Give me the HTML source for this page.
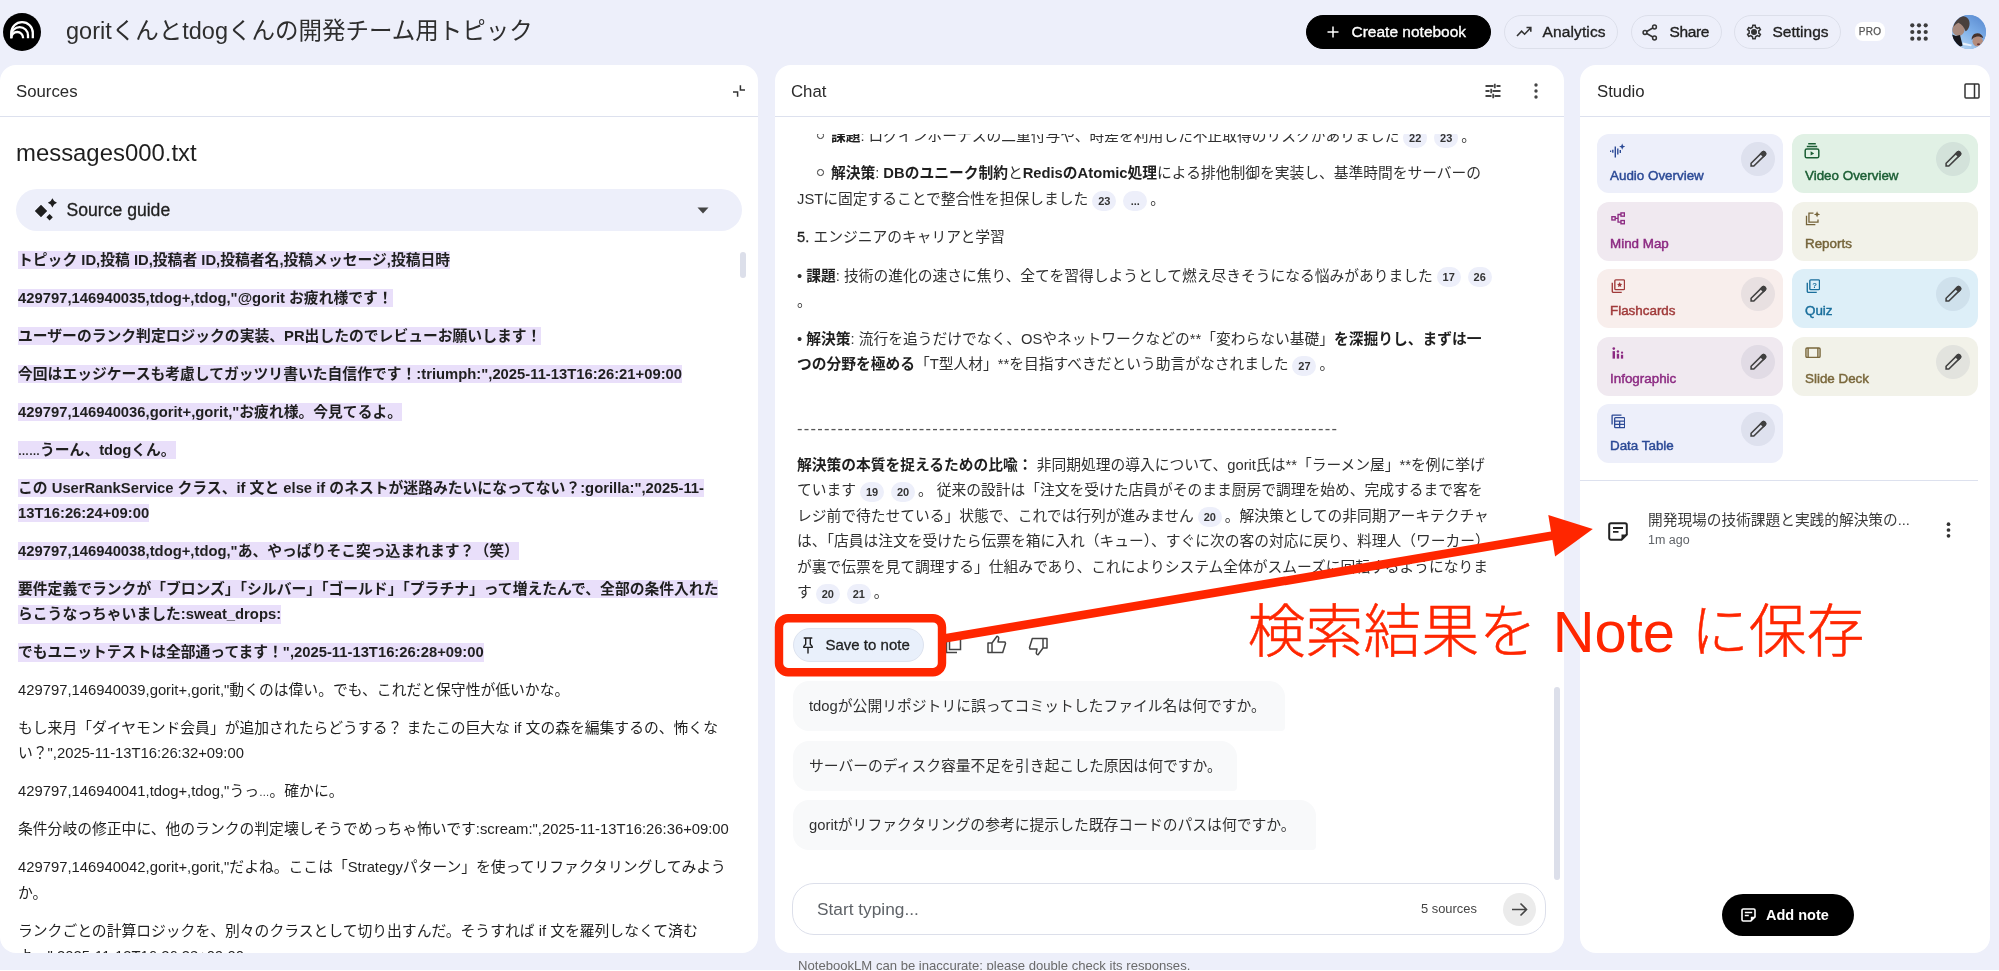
<!DOCTYPE html>
<html lang="ja">
<head>
<meta charset="utf-8">
<title>NotebookLM</title>
<style>
*{box-sizing:border-box;margin:0;padding:0}
html,body{width:1999px;height:971px;overflow:hidden}
body{will-change:transform;background:#edeffa;font-family:"Liberation Sans","Noto Sans CJK JP",sans-serif;color:#1f1f1f;position:relative;-webkit-font-smoothing:antialiased}
.abs{position:absolute}
.panel{position:absolute;top:65px;height:888px;background:#fff;border-radius:16px;overflow:hidden}
.phead{position:absolute;left:0;right:0;top:0;height:52px;border-bottom:1px solid #dde1ee}
.ptitle{position:absolute;left:16px;top:16.5px;font-size:16.8px;line-height:20px;color:#2a2a2a}
svg{display:block}
/* header */
.logo{left:3px;top:13px;width:38px;height:38px;border-radius:50%;background:#000}
.title{left:66px;top:14px;font-size:23.5px;line-height:34px;color:#2e2e2e;white-space:nowrap}
.btn{position:absolute;top:14.5px;height:34px;border-radius:17px;border:1px solid #dcdfea;font-size:15.5px;line-height:32px;color:#1f1f1f;white-space:nowrap;-webkit-text-stroke:0.35px}
.btn span{position:absolute;top:0}
.btn svg{position:absolute}
.create{left:1306px;width:185px;background:#000;border-color:#000;color:#fff}
/* sources */
.src p{font-size:14.8px;line-height:25.4px;margin:0 0 12.6px 0;color:#1f1f1f;white-space:nowrap}
.src p.b{font-weight:bold}
.src p.b span{background:#e9dffa;padding:0.5px 0 1.7px}
/* chat */
.chat p{position:absolute;left:22px;font-size:14.75px;line-height:25.5px;color:#303030;white-space:nowrap}
.chat b{color:#1f1f1f}
.ob{display:inline-block;width:6.6px;height:6.6px;border:1.1px solid #333;border-radius:50%;vertical-align:2.2px;margin:0 7px 0 2.3px}
.cite{display:inline-block;min-width:24px;height:20px;border-radius:10px;background:#edeffa;font-size:11px;line-height:20px;text-align:center;font-weight:bold;color:#333;vertical-align:-0.9px;margin:0 3px 0 4px;padding:0 5px}
.sug{position:absolute;left:18px;height:50px;border-radius:16px 16px 4px 16px;background:#f8f9fa;font-size:14.8px;line-height:50px;padding-left:16px;color:#303030;white-space:nowrap}
/* studio */
.card{position:absolute;width:186px;height:59px;border-radius:12px}
.card .lbl{position:absolute;left:13px;top:34.2px;font-size:13.4px;line-height:16px;-webkit-text-stroke:0.45px;white-space:nowrap}
.card .ic{position:absolute;left:13.5px;top:9px}
.card .ed{position:absolute;right:8.3px;top:8.4px;width:34px;height:34px;border-radius:50%;background:rgba(20,30,70,0.065)}
.card .ed svg{position:absolute;left:0;top:0}
</style>
</head>
<body>
<div class="abs logo"><svg width="38" height="38" viewBox="0 0 38 38"><g fill="none" stroke="#fff" stroke-width="2.3"><path d="M8.300 25.600V19.850A10.750 10.750 0 0 1 29.800 19.850V25.200"/><path d="M8.300 22.450A8.350 8.350 0 0 1 25 22.450V25.200"/><path d="M8.300 24.900A5.900 5.900 0 0 1 20.100 24.900V25.200"/></g></svg></div>
<div class="abs title">goritくんとtdogくんの開発チーム用トピック</div>
<div class="btn create"><svg style="left:20px;top:10px" width="12" height="12" viewBox="0 0 12 12"><path d="M6 0.5v11M0.5 6h11" stroke="#fff" stroke-width="1.5" fill="none"/></svg><span style="left:44.5px">Create notebook</span></div>
<div class="btn" style="left:1504px;width:114px"><svg style="left:11px;top:9px" width="16" height="14" viewBox="0 0 16 14"><path d="M1 11l4.6-4.8 3 3L14.5 3M10.5 2.5h4.3v4.3" stroke="#333" stroke-width="1.6" fill="none"/></svg><span style="left:37.5px;letter-spacing:0.13px">Analytics</span></div>
<div class="btn" style="left:1631px;width:91px"><svg style="left:10px;top:8px" width="16" height="17" viewBox="0 0 16 17"><g fill="none" stroke="#333" stroke-width="1.5"><circle cx="12.5" cy="3" r="1.9"/><circle cx="3" cy="8.5" r="1.9"/><circle cx="12.5" cy="14" r="1.9"/><path d="M4.7 7.5l6.1-3.5M4.7 9.5l6.1 3.5"/></g></svg><span style="left:37.5px;letter-spacing:-0.4px">Share</span></div>
<div class="btn" style="left:1734px;width:107px"><svg style="left:10px;top:7px" width="18" height="18" viewBox="0 0 24 24"><path fill="#333" d="M19.43 12.98c.04-.32.07-.64.07-.98s-.03-.66-.07-.98l2.11-1.65a.5.5 0 0 0 .12-.64l-2-3.46a.5.5 0 0 0-.61-.22l-2.49 1a7.3 7.3 0 0 0-1.69-.98l-.38-2.65A.49.49 0 0 0 14 2h-4a.49.49 0 0 0-.49.42l-.38 2.65c-.61.25-1.17.59-1.69.98l-2.49-1a.5.5 0 0 0-.61.22l-2 3.46a.5.5 0 0 0 .12.64l2.11 1.65c-.04.32-.07.65-.07.98s.03.66.07.98l-2.11 1.65a.5.5 0 0 0-.12.64l2 3.46c.12.22.39.3.61.22l2.49-1c.52.4 1.08.73 1.69.98l.38 2.65c.03.24.24.42.49.42h4c.25 0 .46-.18.49-.42l.38-2.65c.61-.25 1.17-.59 1.69-.98l2.49 1c.23.09.49 0 .61-.22l2-3.46a.5.5 0 0 0-.12-.64l-2.11-1.65zm-1.98-1.71c.04.31.05.52.05.73s-.02.43-.05.73l-.14 1.13.89.7 1.08.84-.7 1.21-1.27-.51-1.04-.42-.9.68c-.43.32-.84.56-1.25.73l-1.06.43-.16 1.13-.2 1.35h-1.4l-.19-1.35-.16-1.13-1.06-.43c-.43-.18-.83-.41-1.23-.71l-.91-.7-1.06.43-1.27.51-.7-1.21 1.08-.84.89-.7-.14-1.13c-.03-.31-.05-.54-.05-.74s.02-.43.05-.73l.14-1.13-.89-.7-1.08-.84.7-1.21 1.27.51 1.04.42.9-.68c.43-.32.84-.56 1.25-.73l1.06-.43.16-1.13.2-1.35h1.39l.19 1.35.16 1.13 1.06.43c.43.18.83.41 1.23.71l.91.7 1.06-.43 1.27-.51.7 1.21-1.07.85-.89.7.14 1.13zM12 8a4 4 0 1 0 0 8 4 4 0 0 0 0-8zm0 6a2 2 0 1 1 0-4 2 2 0 0 1 0 4z"/><circle cx="12" cy="12" r="3" fill="#333"/></svg><span style="left:37.5px">Settings</span></div>
<div class="abs" style="left:1855px;top:22px;width:30px;height:19px;border-radius:8px;background:#fff;font-size:10px;line-height:19px;text-align:center;color:#555;letter-spacing:0.2px;-webkit-text-stroke:0.25px">PRO</div>
<svg class="abs" style="left:1910px;top:23px" width="18" height="18" viewBox="0 0 18 18"><g fill="#3c3c3c"><circle cx="2.3" cy="2.3" r="2.1"/><circle cx="9" cy="2.3" r="2.1"/><circle cx="15.7" cy="2.3" r="2.1"/><circle cx="2.3" cy="9" r="2.1"/><circle cx="9" cy="9" r="2.1"/><circle cx="15.7" cy="9" r="2.1"/><circle cx="2.3" cy="15.7" r="2.1"/><circle cx="9" cy="15.7" r="2.1"/><circle cx="15.7" cy="15.7" r="2.1"/></g></svg>
<div class="abs" style="left:1952px;top:14.700px;width:34px;height:34px;border-radius:50%;overflow:hidden;background:#6f9fde"><svg width="34" height="34" viewBox="0 0 34 34"><defs><linearGradient id="sky" x1="1" y1="0" x2="0.300" y2="1"><stop offset="0" stop-color="#5585cc"/><stop offset="0.550" stop-color="#7eb0ea"/><stop offset="1" stop-color="#b4d4f2"/></linearGradient><filter id="bl" x="-20%" y="-20%" width="140%" height="140%"><feGaussianBlur stdDeviation="0.700"/></filter></defs><rect width="34" height="34" fill="url(#sky)"/><g filter="url(#bl)"><path d="M11 27.500l9 2.200-1 1.500-8.500-1.500z" fill="#e8f0fa"/><ellipse cx="6.400" cy="14.400" rx="6.200" ry="6.600" fill="#a88a7e"/><path d="M1.500 12c1-7 6-11.500 11-10.500 4.500 1 6 6 4.500 10.500-.8 2.400-2 3.800-3.500 4.200-1-3.500-3.500-7-7-8.500-2 .8-4 2.500-5 4.300z" fill="#4a403e"/><path d="M0 19.500l4 1.500 4-1 2.600 10.500-3 1.500L0 24z" fill="#17171b"/><ellipse cx="25.700" cy="26.200" rx="5.200" ry="5.200" fill="#b48c7c"/><path d="M19.800 25c-.5-4 2-6.800 5.500-6.800 3.200 0 5.500 2 6 5-2-1.200-4.500-1.800-7-1.500-2 .3-3.500 1.500-4.500 3.300z" fill="#46322c"/><ellipse cx="26.500" cy="29.200" rx="1.600" ry="1" fill="#6a3a38"/></g></svg></div>

<div class="panel" style="left:0;width:758px">
<div class="phead"><div class="ptitle">Sources</div>
<svg class="abs" style="left:732px;top:19px" width="14" height="14" viewBox="0 0 14 14"><path d="M1 8h4.6v4.8M13 6H8.4V1.2" stroke="#333" stroke-width="1.5" fill="none"/></svg></div>
<div class="abs" style="left:16px;top:72px;font-size:23.9px;line-height:32px;color:#1f1f1f;white-space:nowrap">messages000.txt</div>
<div class="abs" style="left:16px;top:124px;width:726px;height:42px;border-radius:21px;background:#edeffa">
<svg class="abs" style="left:16px;top:8px" width="28" height="26" viewBox="0 0 28 26"><path fill="#1f1f1f" d="M9 7.800l6.200 6.200L9 20.200 2.800 14zM20.400 1.200l1.700 2.900 2.900 1.700-2.900 1.700-1.700 2.900-1.700-2.900-2.900-1.700 2.900-1.700zM17.600 17l3.200 3.200-3.200 3.200-3.200-3.200z"/></svg>
<div class="abs" style="left:50.5px;top:10px;font-size:17.6px;line-height:22px;color:#1f1f1f;-webkit-text-stroke:0.3px #1f1f1f">Source guide</div>
<svg class="abs" style="left:681px;top:18px" width="12" height="7" viewBox="0 0 12 7"><path d="M0.500 0.500h11L6 6.500z" fill="#444"/></svg>
</div>
<div class="abs" style="left:740px;top:187px;width:6px;height:26px;border-radius:3px;background:#dcdfea"></div>
<div class="abs src" style="left:18px;top:182px;width:730px">
<p class="b"><span>トピック ID,投稿 ID,投稿者 ID,投稿者名,投稿メッセージ,投稿日時</span></p>
<p class="b"><span>429797,146940035,tdog+,tdog,"@gorit お疲れ様です！</span></p>
<p class="b"><span>ユーザーのランク判定ロジックの実装、PR出したのでレビューお願いします！</span></p>
<p class="b"><span>今回はエッジケースも考慮してガッツリ書いた自信作です！:triumph:",2025-11-13T16:26:21+09:00</span></p>
<p class="b"><span>429797,146940036,gorit+,gorit,"お疲れ様。今見てるよ。</span></p>
<p class="b"><span><i style="font-style:normal;font-size:11px;line-height:0">……</i>うーん、tdogくん。</span></p>
<p class="b"><span>この UserRankService クラス、if 文と else if のネストが迷路みたいになってない？:gorilla:",2025-11-</span><br><span>13T16:26:24+09:00</span></p>
<p class="b"><span>429797,146940038,tdog+,tdog,"あ、やっぱりそこ突っ込まれます？（笑）</span></p>
<p class="b"><span>要件定義でランクが「ブロンズ」「シルバー」「ゴールド」「プラチナ」って増えたんで、全部の条件入れた</span><br><span>らこうなっちゃいました:sweat_drops:</span></p>
<p class="b"><span>でもユニットテストは全部通ってます！",2025-11-13T16:26:28+09:00</span></p>
<p>429797,146940039,gorit+,gorit,"動くのは偉い。でも、これだと保守性が低いかな。</p>
<p>もし来月「ダイヤモンド会員」が追加されたらどうする？ またこの巨大な if 文の森を編集するの、怖くな<br>い？",2025-11-13T16:26:32+09:00</p>
<p>429797,146940041,tdog+,tdog,"うっ<i style="font-style:normal;font-size:10.5px;line-height:0">…</i>。確かに。</p>
<p>条件分岐の修正中に、他のランクの判定壊しそうでめっちゃ怖いです:scream:",2025-11-13T16:26:36+09:00</p>
<p>429797,146940042,gorit+,gorit,"だよね。ここは「Strategyパターン」を使ってリファクタリングしてみよう<br>か。</p>
<p>ランクごとの計算ロジックを、別々のクラスとして切り出すんだ。そうすれば if 文を羅列しなくて済む<br>よ。",2025-11-13T16:26:38+09:00</p>
</div>
</div>

<div class="panel chat" style="left:775px;width:788.700px">
<div class="phead"><div class="ptitle">Chat</div>
<svg class="abs" style="left:710px;top:18px" width="16" height="16" viewBox="0 0 16 16"><g stroke="#444" stroke-width="1.800" fill="none"><path d="M0.5 3h8M11.5 3h4M0.5 8h4M7.500 8h8M0.500 13h6M9.500 13h6"/><path d="M9.800 0.800v4.400M6.200 5.800v4.400M8.200 10.800v4.400"/></g></svg>
<svg class="abs" style="left:759px;top:18px" width="4" height="16" viewBox="0 0 4 16"><g fill="#444"><circle cx="2" cy="2" r="1.700"/><circle cx="2" cy="8" r="1.700"/><circle cx="2" cy="14" r="1.700"/></g></svg>
</div>
<div class="abs" style="left:0;top:68.5px;width:788px;height:600px;overflow:hidden">
<p style="top:-9.500px;left:40px"><span class="ob"></span><b>課題</b>: ログインボーナスの二重付与や、時差を利用した不正取得のリスクがありました<span class="cite">22</span><span class="cite">23</span>。</p>
<p style="top:27.5px;left:40px"><span class="ob"></span><b>解決策</b>: <b>DBのユニーク制約</b>と<b>RedisのAtomic処理</b>による排他制御を実装し、基準時間をサーバーの</p>
<p style="top:53.5px">JSTに固定することで整合性を担保しました<span class="cite">23</span><span class="cite">...</span>。</p>
<p style="top:91.5px"><b style="font-weight:normal;-webkit-text-stroke:0.3px">5.</b> エンジニアのキャリアと学習</p>
<p style="top:130.0px">• <b>課題</b>: 技術の進化の速さに焦り、全てを習得しようとして燃え尽きそうになる悩みがありました<span class="cite">17</span><span class="cite">26</span></p>
<p style="top:155.5px">。</p>
<p style="top:193.5px">• <b>解決策</b>: 流行を追うだけでなく、OSやネットワークなどの**「変わらない基礎」<b>を深掘りし、まずは一</b></p>
<p style="top:218.5px"><b>つの分野を極める</b>「T型人材」**を目指すべきだという助言がなされました<span class="cite">27</span>。</p>
<p style="top:282.0px;color:#555;font-size:16.500px;letter-spacing:1.270px">--------------------------------------------------------------------------------</p>
<p style="top:319.0px"><b>解決策の本質を捉えるための比喩：</b> 非同期処理の導入について、gorit氏は**「ラーメン屋」**を例に挙げ</p>
<p style="top:344.5px">ています<span class="cite">19</span><span class="cite">20</span>。 従来の設計は「注文を受けた店員がそのまま厨房で調理を始め、完成するまで客を</p>
<p style="top:370.0px">レジ前で待たせている」状態で、これでは行列が進みません<span class="cite">20</span>。解決策としての非同期アーキテクチャ</p>
<p style="top:395.5px">は、「店員は注文を受けたら伝票を箱に入れ（キュー）、すぐに次の客の対応に戻り、料理人（ワーカー）</p>
<p style="top:421.0px">が裏で伝票を見て調理する」仕組みであり、これによりシステム全体がスムーズに回転するようになりま</p>
<p style="top:446.5px">す<span class="cite">20</span><span class="cite">21</span>。</p>
</div>
<div class="abs" style="left:18px;top:563px;width:131px;height:34px;border-radius:17px;background:#e9f0fb;border:1px solid #dde3ef">
<svg class="abs" style="left:8px;top:8px" width="12" height="17" viewBox="0 0 12 17"><path d="M2.200 1h7.600M3.700 1v6.200L1.800 9.400v1h8.400v-1L8.300 7.200V1M6 10.400V16" stroke="#1f1f1f" stroke-width="1.400" fill="none" stroke-linejoin="round" stroke-linecap="round"/></svg>
<div class="abs" style="left:31.500px;top:7px;font-size:15px;line-height:18px;white-space:nowrap;color:#1f1f1f;-webkit-text-stroke:0.3px #1f1f1f">Save to note</div></div>
<svg class="abs" style="left:170px;top:572px" width="17" height="17" viewBox="0 0 17 17"><path d="M4.500 1.500h11v11h-11zM1.500 5v10.500H12" stroke="#444" stroke-width="1.500" fill="none"/></svg>
<svg class="abs" style="left:212px;top:570px" width="20" height="19" viewBox="0 0 20 19"><path d="M1 8h4v9.500H1zM5 8l5-6.800c1.500.3 2 1.600 1.600 2.800L11 7h7l.500 1.500-2.800 9H5" stroke="#444" stroke-width="1.500" fill="none" stroke-linejoin="round"/></svg>
<svg class="abs" style="left:253px;top:572px" width="20" height="19" viewBox="0 0 20 19"><g transform="rotate(180 10 9.500)"><path d="M1 8h4v9.500H1zM5 8l5-6.800c1.500.3 2 1.600 1.600 2.800L11 7h7l.500 1.500-2.800 9H5" stroke="#444" stroke-width="1.500" fill="none" stroke-linejoin="round"/></g></svg>
<div class="sug" style="top:616px;width:492px">tdogが公開リポジトリに誤ってコミットしたファイル名は何ですか。</div>
<div class="sug" style="top:675.500px;width:444px">サーバーのディスク容量不足を引き起こした原因は何ですか。</div>
<div class="sug" style="top:734.500px;width:523px">goritがリファクタリングの参考に提示した既存コードのパスは何ですか。</div>
<div class="abs" style="left:779px;top:622px;width:6px;height:193px;border-radius:3px;background:#dcdfea"></div>
<div class="abs" style="left:17px;top:818.200px;width:754px;height:52.300px;border-radius:22px;border:1px solid #dcdfea;background:#fff">
<div class="abs" style="left:24px;top:14px;font-size:17.3px;line-height:22px;color:#5f6368;white-space:nowrap">Start typing...</div>
<div class="abs" style="left:628px;top:17px;font-size:12.9px;line-height:16px;color:#444;white-space:nowrap">5 sources</div>
<div class="abs" style="left:710px;top:8.500px;width:33px;height:33px;border-radius:50%;background:#ebebeb"><svg class="abs" style="left:8px;top:8px" width="17" height="17" viewBox="0 0 17 17"><path d="M1 8.500h14M9.500 2.500l6 6-6 6" stroke="#444" stroke-width="1.600" fill="none"/></svg></div>
</div>

</div>

<div class="abs" style="left:798px;top:958px;font-size:13.1px;line-height:16px;color:#6a6a6a;white-space:nowrap">NotebookLM can be inaccurate; please double check its responses.</div>
<div class="panel" style="left:1580px;width:410.400px">
<div class="phead"><div class="ptitle" style="left:17px">Studio</div>
<svg class="abs" style="left:384px;top:18px" width="16" height="16" viewBox="0 0 16 16"><g stroke="#333" stroke-width="1.500" fill="none"><rect x="1" y="1" width="14" height="14" rx="1"/><path d="M10.500 1v14"/></g></svg></div>
<div class="card" style="left:17px;top:69.0px;background:#edeffa;color:#2c4a96"><div class="ic"><svg width="17" height="16" viewBox="0 0 17 16" style="margin-left:-1.500px"><g stroke="#2c4a96" stroke-width="1.400" fill="none"><path d="M1 8.300h1.200M3.800 6.800v3M6.300 3.500v11M8.800 5.500v6M11.300 7v3"/></g><path d="M13.200 0.500l.9 2.200 2.200.9-2.200.9-.9 2.200-.9-2.200-2.200-.9 2.200-.9z" fill="#2c4a96"/></svg></div><div class="lbl">Audio Overview</div><div class="ed"><svg width="34" height="34" viewBox="0 0 34 34"><g transform="translate(9.300 24.800) rotate(-44.600)"><path d="M1.130 0L3.050 -1.950H18.600A1.950 1.950 0 0 1 18.600 1.950H3.050Z" fill="none" stroke="#404040" stroke-width="1.550"/><path d="M16.700 -1.950H18.600A1.950 1.950 0 0 1 18.600 1.950H16.700Z" fill="#404040" stroke="#404040" stroke-width="1.550"/></g></svg></div></div>
<div class="card" style="left:212px;top:69.0px;background:#e1f1e5;color:#1b5e34"><div class="ic"><svg width="16" height="16" viewBox="0 0 16 16" style="margin-left:-1.500px"><g stroke="#1b5e34" stroke-width="1.500" fill="none"><path d="M4.200 0.800h7.600M2.800 3.400h10.400"/><rect x="1.200" y="6" width="13.600" height="8.800" rx="1.600"/></g><path d="M6.600 8.200v4.400l3.600-2.200z" fill="#1b5e34"/></svg></div><div class="lbl">Video Overview</div><div class="ed"><svg width="34" height="34" viewBox="0 0 34 34"><g transform="translate(9.300 24.800) rotate(-44.600)"><path d="M1.130 0L3.050 -1.950H18.600A1.950 1.950 0 0 1 18.600 1.950H3.050Z" fill="none" stroke="#404040" stroke-width="1.550"/><path d="M16.700 -1.950H18.600A1.950 1.950 0 0 1 18.600 1.950H16.700Z" fill="#404040" stroke="#404040" stroke-width="1.550"/></g></svg></div></div>
<div class="card" style="left:17px;top:136.5px;background:#f0e9f0;color:#8c2a82"><div class="ic"><svg width="14.500" height="12.700" viewBox="0 0 16 14" style="margin-top:1.500px"><g stroke="#8c2a82" stroke-width="1.500" fill="none"><rect x="1" y="5.200" width="3.600" height="3.600"/><rect x="11" y="1" width="3.800" height="3.600"/><rect x="11" y="9.400" width="3.800" height="3.600"/><path d="M4.600 7h3.200M11 2.800H7.800v8.400H11"/></g></svg></div><div class="lbl">Mind Map</div></div>
<div class="card" style="left:212px;top:136.5px;background:#f2f2e9;color:#75643a"><div class="ic"><svg width="16" height="16" viewBox="0 0 17 17" style="margin-left:-1px"><g stroke="#75643a" stroke-width="1.400" fill="none"><path d="M9 2.200H4.200v9.600h9.600V9"/><path d="M1.600 5v9.400H11"/></g><path d="M12.800 0.200l1 2.400 2.400 1-2.400 1-1 2.400-1-2.400-2.400-1 2.400-1z" fill="#75643a"/></svg></div><div class="lbl">Reports</div></div>
<div class="card" style="left:17px;top:204.0px;background:#f8eeec;color:#a03a3a"><div class="ic"><svg width="14.600" height="14.600" viewBox="0 0 16 16" style="margin-top:1px"><g stroke="#a03a3a" stroke-width="1.500" fill="none"><rect x="4.200" y="1" width="10.600" height="10.600" rx="1"/><path d="M1.400 4.200v9.200a1.200 1.200 0 0 0 1.200 1.200h9.200"/></g><path d="M9.500 3.400l.9 1.900 2 .2-1.500 1.400.4 2-1.800-1-1.800 1 .4-2L6.600 5.500l2-.2z" fill="#a03a3a"/></svg></div><div class="lbl">Flashcards</div><div class="ed"><svg width="34" height="34" viewBox="0 0 34 34"><g transform="translate(9.300 24.800) rotate(-44.600)"><path d="M1.130 0L3.050 -1.950H18.600A1.950 1.950 0 0 1 18.600 1.950H3.050Z" fill="none" stroke="#404040" stroke-width="1.550"/><path d="M16.700 -1.950H18.600A1.950 1.950 0 0 1 18.600 1.950H16.700Z" fill="#404040" stroke="#404040" stroke-width="1.550"/></g></svg></div></div>
<div class="card" style="left:212px;top:204.0px;background:#ddeff8;color:#1a6f9c"><div class="ic"><svg width="14.600" height="14.600" viewBox="0 0 16 16" style="margin-top:1px"><g stroke="#1a6f9c" stroke-width="1.500" fill="none"><rect x="4.200" y="1" width="10.600" height="10.600" rx="1"/><path d="M1.400 4.200v9.200a1.200 1.200 0 0 0 1.200 1.200h9.200"/></g><text x="9.500" y="9.600" font-family="Liberation Sans,sans-serif" font-size="8.500" font-weight="bold" text-anchor="middle" fill="#1a6f9c">?</text></svg></div><div class="lbl">Quiz</div><div class="ed"><svg width="34" height="34" viewBox="0 0 34 34"><g transform="translate(9.300 24.800) rotate(-44.600)"><path d="M1.130 0L3.050 -1.950H18.600A1.950 1.950 0 0 1 18.600 1.950H3.050Z" fill="none" stroke="#404040" stroke-width="1.550"/><path d="M16.700 -1.950H18.600A1.950 1.950 0 0 1 18.600 1.950H16.700Z" fill="#404040" stroke="#404040" stroke-width="1.550"/></g></svg></div></div>
<div class="card" style="left:17px;top:271.5px;background:#f0e9f0;color:#8c2a82"><div class="ic"><svg width="12.200" height="12.200" viewBox="0 0 13 13" style="margin:1.200px 0 0 1.600px"><g fill="#8c2a82"><circle cx="1.900" cy="1.700" r="1.400"/><rect x="0.600" y="4.400" width="2.600" height="8"/><circle cx="6.300" cy="4.700" r="1.300"/><rect x="5.100" y="7.200" width="2.500" height="5.200"/><circle cx="10.700" cy="6" r="1.200"/><rect x="9.500" y="8.300" width="2.400" height="4.100"/></g></svg></div><div class="lbl">Infographic</div><div class="ed"><svg width="34" height="34" viewBox="0 0 34 34"><g transform="translate(9.300 24.800) rotate(-44.600)"><path d="M1.130 0L3.050 -1.950H18.600A1.950 1.950 0 0 1 18.600 1.950H3.050Z" fill="none" stroke="#404040" stroke-width="1.550"/><path d="M16.700 -1.950H18.600A1.950 1.950 0 0 1 18.600 1.950H16.700Z" fill="#404040" stroke="#404040" stroke-width="1.550"/></g></svg></div></div>
<div class="card" style="left:212px;top:271.5px;background:#f2f2e9;color:#7a683c"><div class="ic"><svg width="16" height="11.300" viewBox="0 0 17 12" style="margin:1.200px 0 0 -1px"><g stroke="#7a683c" stroke-width="1.500" fill="none"><rect x="1" y="1" width="15" height="10" rx="1.200"/><path d="M3.300 1v10M13.700 1v10"/></g></svg></div><div class="lbl">Slide Deck</div><div class="ed"><svg width="34" height="34" viewBox="0 0 34 34"><g transform="translate(9.300 24.800) rotate(-44.600)"><path d="M1.130 0L3.050 -1.950H18.600A1.950 1.950 0 0 1 18.600 1.950H3.050Z" fill="none" stroke="#404040" stroke-width="1.550"/><path d="M16.700 -1.950H18.600A1.950 1.950 0 0 1 18.600 1.950H16.700Z" fill="#404040" stroke="#404040" stroke-width="1.550"/></g></svg></div></div>
<div class="card" style="left:17px;top:339.0px;background:#edeffa;color:#2c4a96"><div class="ic"><svg width="14.600" height="14.600" viewBox="0 0 16 16" style="margin-top:1px"><g stroke="#2c4a96" stroke-width="1.450" fill="none"><rect x="4" y="4" width="11" height="11" rx="1"/><path d="M4 7.800h11M4 11.400h11M9.500 7.800V15"/><path d="M1.200 11.500V1.800a.6.600 0 0 1 .6-.6h9.700"/></g></svg></div><div class="lbl">Data Table</div><div class="ed"><svg width="34" height="34" viewBox="0 0 34 34"><g transform="translate(9.300 24.800) rotate(-44.600)"><path d="M1.130 0L3.050 -1.950H18.600A1.950 1.950 0 0 1 18.600 1.950H3.050Z" fill="none" stroke="#404040" stroke-width="1.550"/><path d="M16.700 -1.950H18.600A1.950 1.950 0 0 1 18.600 1.950H16.700Z" fill="#404040" stroke="#404040" stroke-width="1.550"/></g></svg></div></div>
<div class="abs" style="left:0;top:414.500px;width:398px;height:1px;background:#dde1ee"></div>
<svg class="abs" style="left:28px;top:457px" width="20" height="19" viewBox="0 0 20 19"><path d="M3 1.200h14a1.800 1.800 0 0 1 1.800 1.800v9.500l-5.300 5.300H3a1.800 1.800 0 0 1-1.800-1.800V3A1.800 1.800 0 0 1 3 1.200z" fill="none" stroke="#222" stroke-width="2"/><path d="M5 6h10M5 9.800h5.500" stroke="#222" stroke-width="1.800"/><path d="M18.800 12.500l-5.300 5.300v-5.300z" fill="#222"/></svg>
<div class="abs" style="left:68px;top:445.400px;font-size:14.700px;line-height:20px;color:#3c3c3c;white-space:nowrap">開発現場の技術課題と実践的解決策の...</div>
<div class="abs" style="left:68px;top:467px;font-size:12.500px;line-height:16px;color:#5f6368;white-space:nowrap">1m ago</div>
<svg class="abs" style="left:366px;top:457px" width="5" height="16" viewBox="0 0 5 16"><g fill="#333"><circle cx="2.500" cy="2.200" r="1.850"/><circle cx="2.500" cy="8" r="1.850"/><circle cx="2.500" cy="13.800" r="1.850"/></g></svg>
<div class="abs" style="left:142px;top:829px;width:132px;height:42px;border-radius:21px;background:#000;color:#fff"><svg class="abs" style="left:19px;top:14px" width="15" height="14" viewBox="0 0 15 14"><path d="M2.200 1h10.600a1.200 1.200 0 0 1 1.200 1.200v6.600L9.800 13H2.200A1.200 1.200 0 0 1 1 11.800V2.200A1.200 1.200 0 0 1 2.200 1z" fill="none" stroke="#fff" stroke-width="1.600"/><path d="M3.800 4.600h7.400M3.800 7.600h4" stroke="#fff" stroke-width="1.500"/><path d="M14 8.800L9.800 13V8.800z" fill="#fff"/></svg><div class="abs" style="left:44px;top:12px;font-size:14.500px;line-height:18px;font-weight:bold;white-space:nowrap">Add note</div></div>
</div>
<svg class="abs" style="left:0;top:0;pointer-events:none" width="1999" height="971" viewBox="0 0 1999 971">
<rect x="779" y="618.200" width="163" height="54" rx="9" ry="9" fill="none" stroke="#ff2600" stroke-width="8.400"/>
<path d="M944 638.500L1553 535.600" stroke="#ff2600" stroke-width="8.600" fill="none"/>
<path d="M1548.300 515.100L1592.800 528.900L1555.100 556.500z" fill="#ff2600"/>
<text x="1247.800" y="651.800" font-family="'Liberation Sans','Noto Sans CJK JP',sans-serif" font-size="57.800" font-weight="300" fill="#ff2600" stroke="#ff2600" stroke-width="0.500">検索結果を<tspan stroke="none"> Note </tspan>に保存</text>
</svg>

<div class="abs" style="left:0;top:969.800px;width:1999px;height:1.200px;background:#fff"></div>
</body>
</html>
